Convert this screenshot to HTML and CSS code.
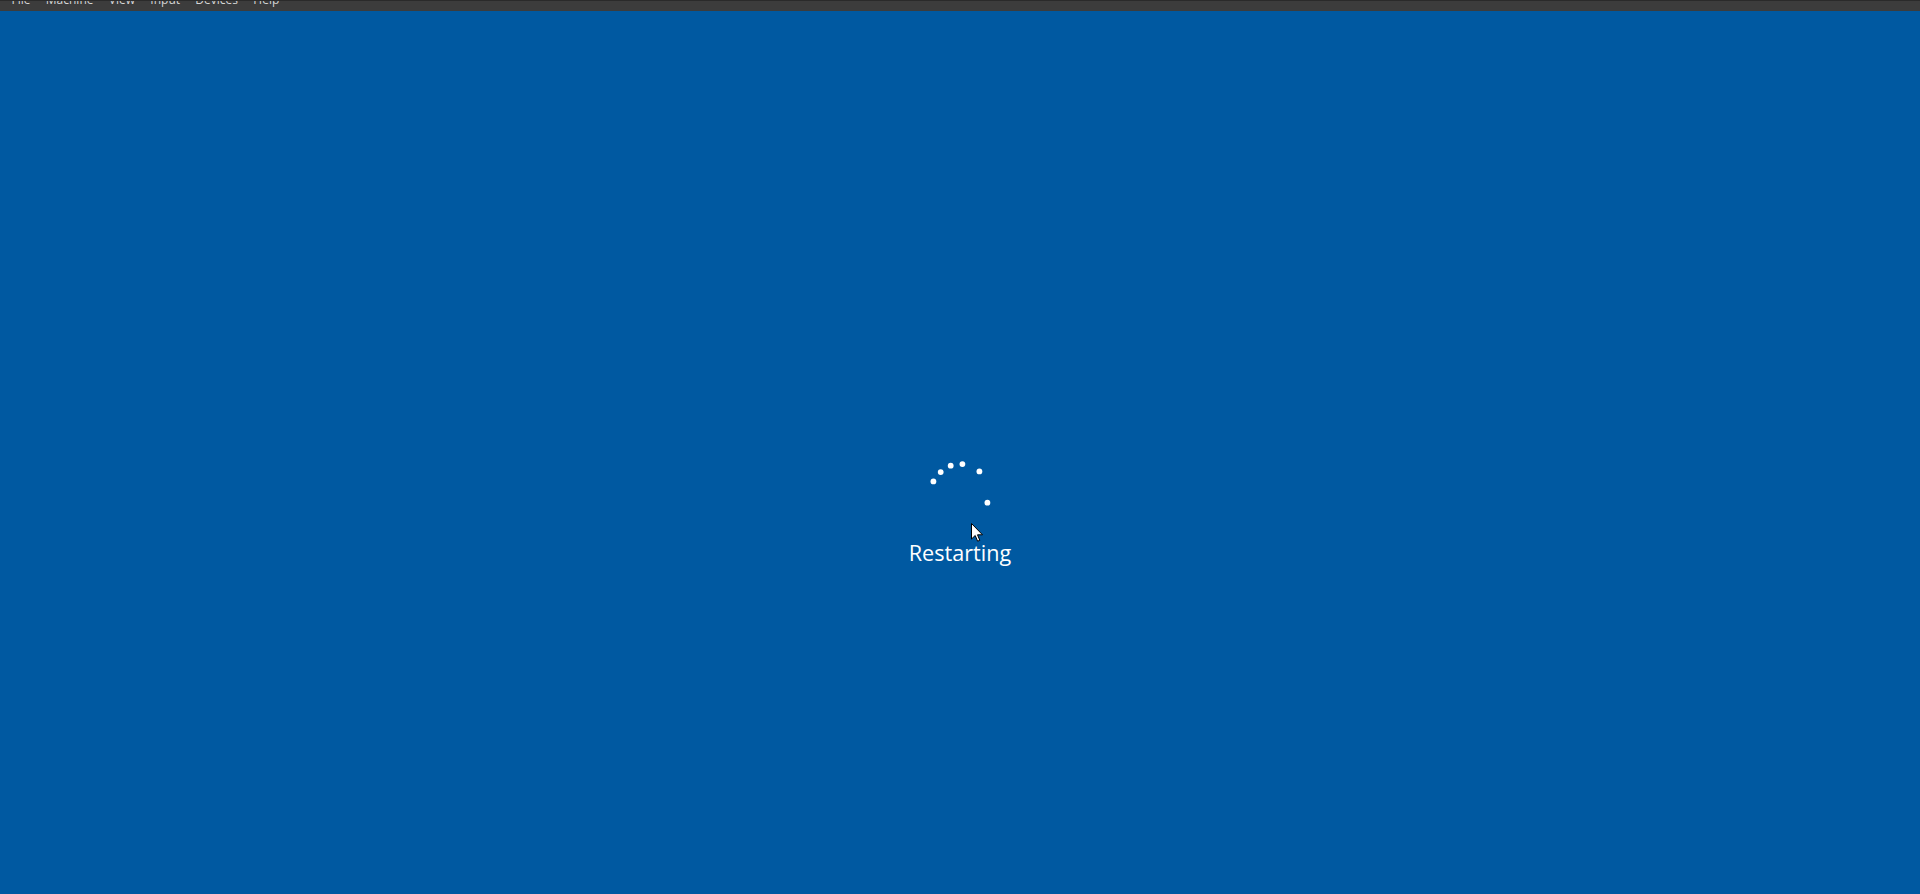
FILE: index.html
```
<!DOCTYPE html>
<html>
<head>
<meta charset="utf-8">
<link rel="stylesheet" href="styles.css">
</head>
<body>
<div class="menubar">
  <span class="item">File</span>
  <span class="item">Machine</span>
  <span class="item">View</span>
  <span class="item">Input</span>
  <span class="item">Devices</span>
  <span class="item">Help</span>
</div>
<main class="screen">
  <svg class="spinner" width="64" height="64" viewBox="0 0 64 64">
    <g fill="#ffffff">
      <circle cx="5.4" cy="20.4" r="2.9"/>
      <circle cx="12.7" cy="11.1" r="2.9"/>
      <circle cx="22.7" cy="4.7" r="2.9"/>
      <circle cx="34.4" cy="3.1" r="2.9"/>
      <circle cx="51.4" cy="10.4" r="2.9"/>
      <circle cx="59.4" cy="41.7" r="2.9"/>
    </g>
  </svg>
  <div class="label">Restarting</div>
  <svg class="cursor" width="14" height="20" viewBox="0 0 14 20">
    <path d="M0.5 0.5 L0.5 16 L4.2 12.5 L6.6 18.2 L8.8 17.3 L6.5 11.8 L11.5 11.8 Z" fill="#ffffff" stroke="#000000" stroke-width="1" stroke-linejoin="miter"/>
  </svg>
</main>
</body>
</html>
```
FILE: styles.css
```
html, body {
  margin: 0;
  padding: 0;
  height: 100%;
  overflow: hidden;
}
body {
  background: #0059a1;
  display: flex;
  flex-direction: column;
}
.menubar {
  height: 10px;
  background: #3c3c3c;
  border-top: 1px solid #2a2a2a;
  overflow: hidden;
  display: flex;
  padding-left: 11.5px;
  font-family: "Open Sans", "Liberation Sans", sans-serif;
  font-size: 12px;
  color: #d6d6d6;
  line-height: 12px;
  flex: none;
}
.item {
  margin-top: -7px;
  margin-right: 15.3px;
}
.screen {
  flex: 1;
  position: relative;
  display: flex;
  flex-direction: column;
  align-items: center;
  padding-top: 450px;
}
.spinner {
  display: block;
}
.label {
  margin-top: 13px;
  font-family: "Open Sans", "Noto Sans", sans-serif;
  font-size: 21.6px;
  line-height: 30px;
  color: #ffffff;
}
.cursor {
  position: absolute;
  left: 971px;
  top: 512px;
}
```
